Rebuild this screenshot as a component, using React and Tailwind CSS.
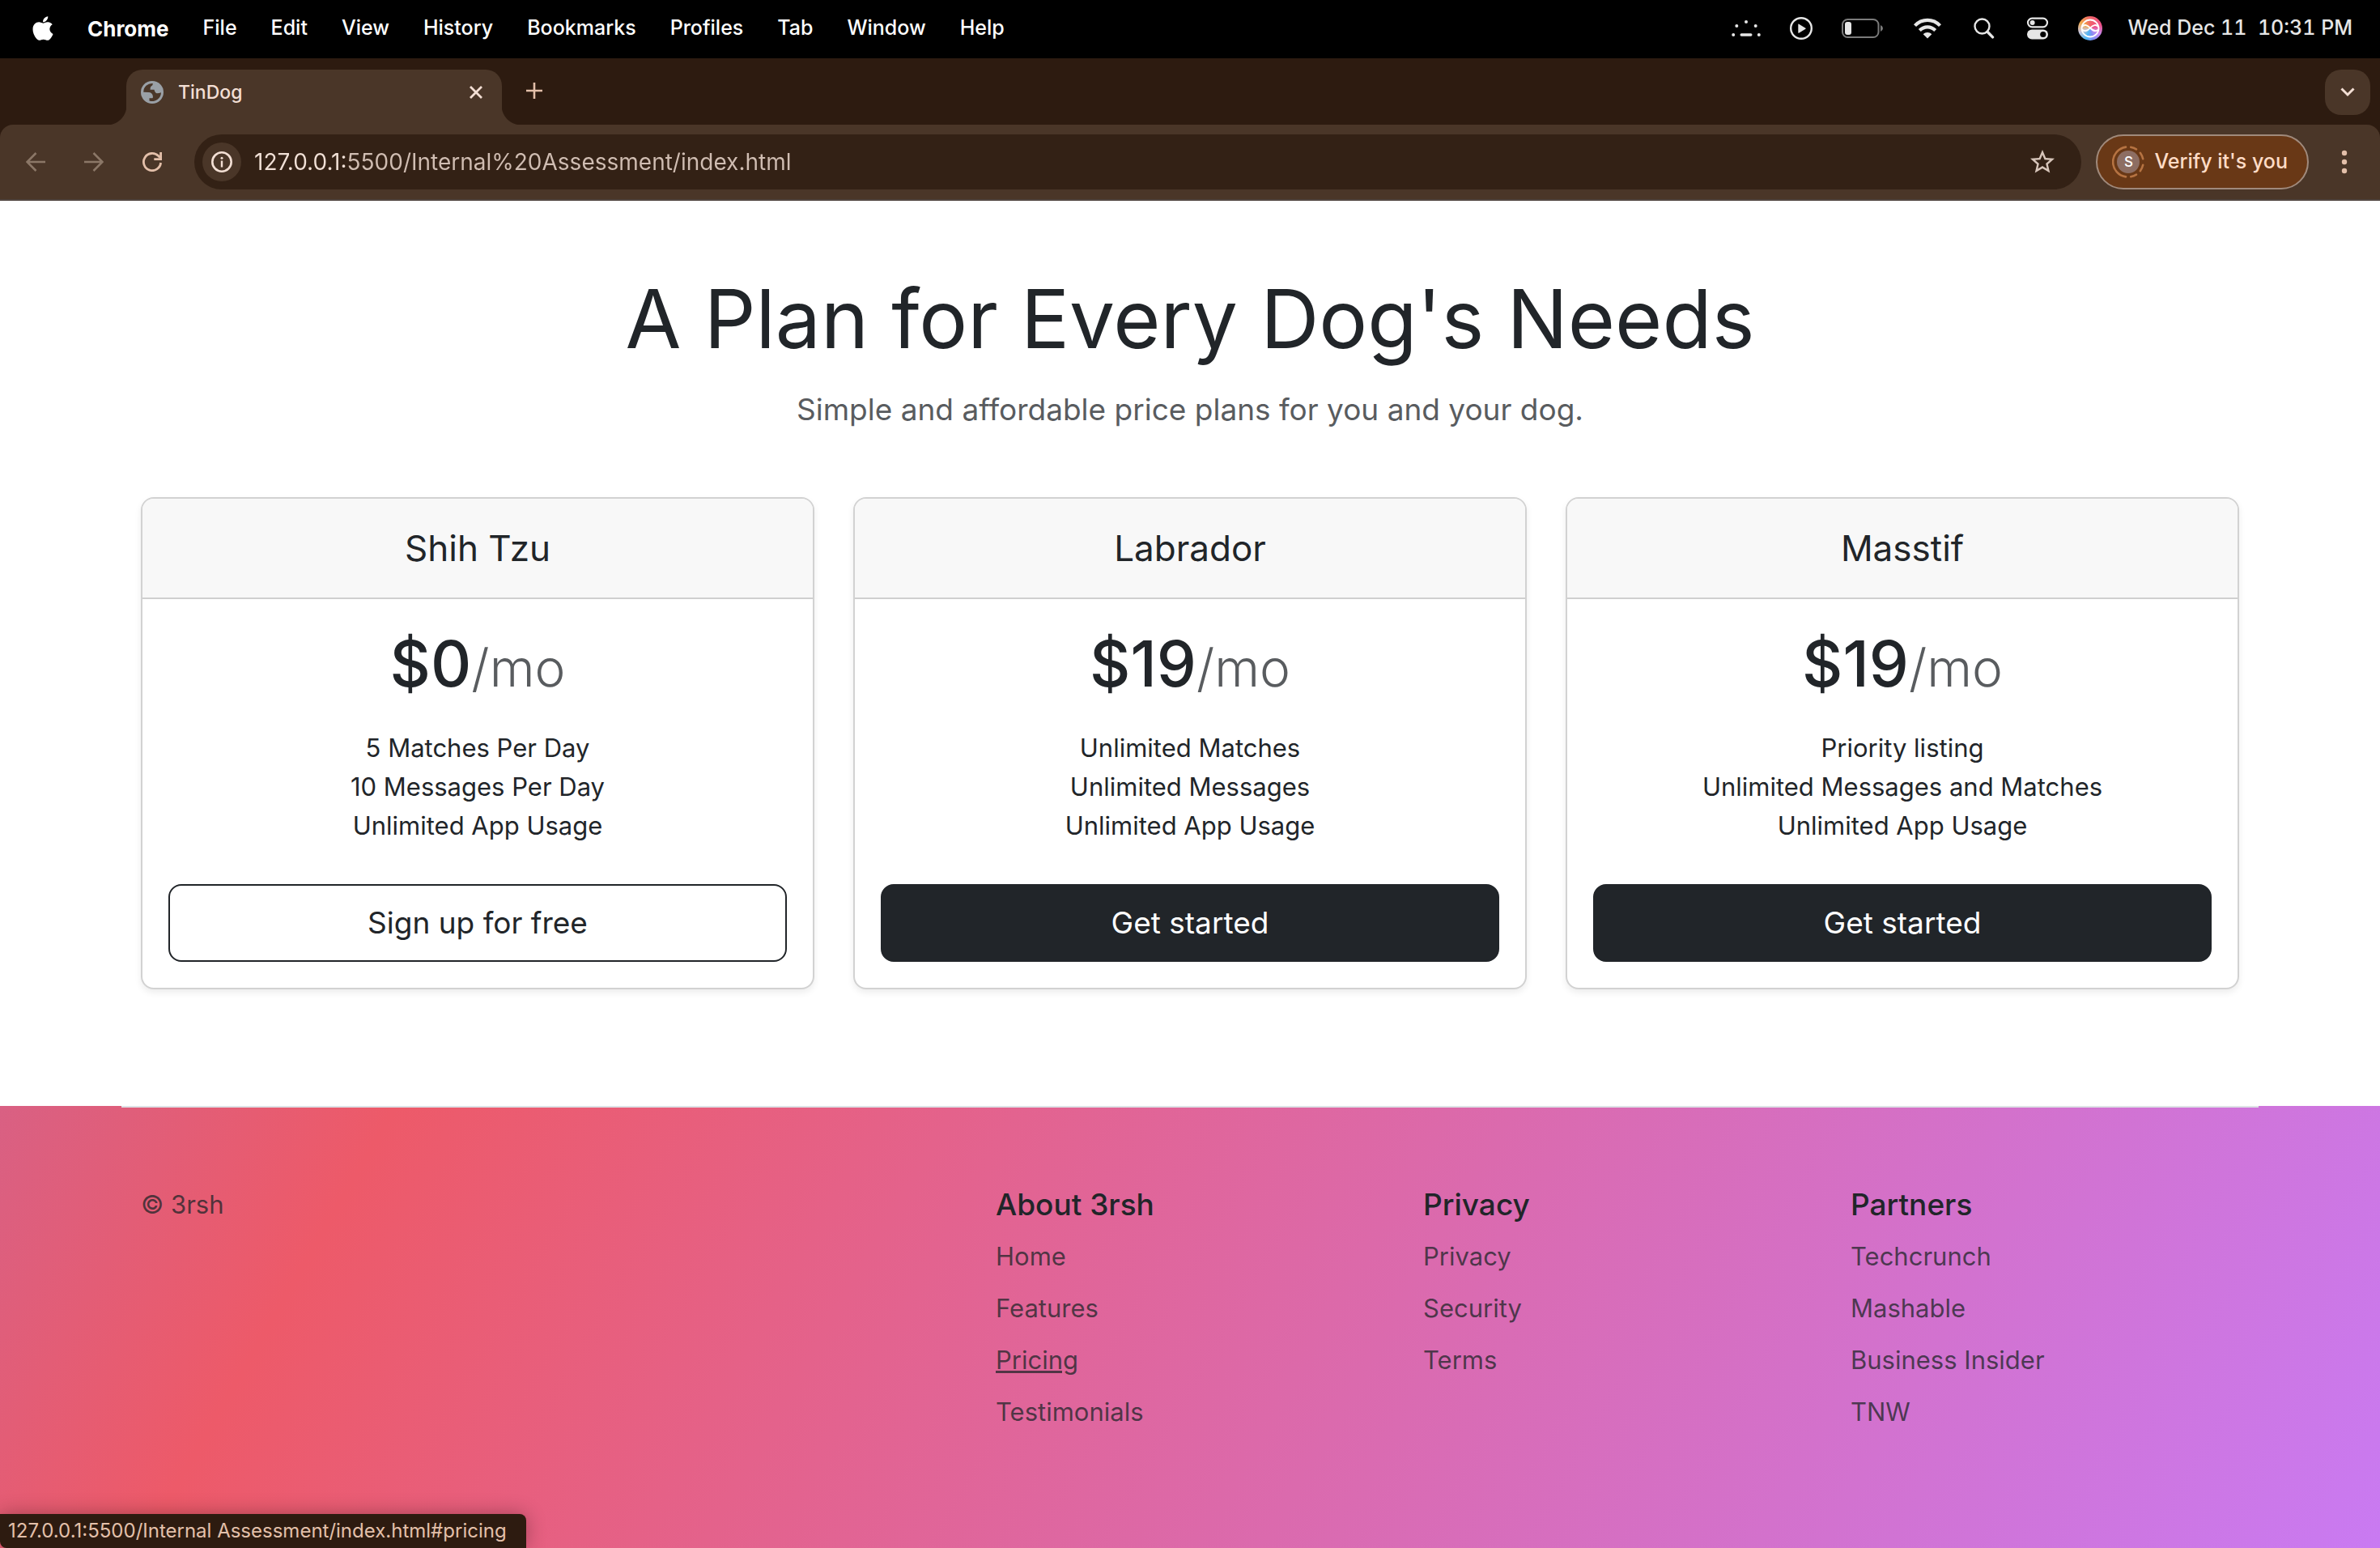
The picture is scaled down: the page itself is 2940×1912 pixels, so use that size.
import React from "react";
import { FaApple } from "react-icons/fa";
import { MdStarBorder } from "react-icons/md";

const MENUS = ["File", "Edit", "View", "History", "Bookmarks", "Profiles", "Tab", "Window", "Help"];

const PLANS = [
  {
    name: "Shih Tzu",
    price: "$0",
    lines: ["5 Matches Per Day", "10 Messages Per Day", "Unlimited App Usage"],
    cta: "Sign up for free",
    outline: true,
  },
  {
    name: "Labrador",
    price: "$19",
    lines: ["Unlimited Matches", "Unlimited Messages", "Unlimited App Usage"],
    cta: "Get started",
  },
  {
    name: "Masstif",
    price: "$19",
    lines: ["Priority listing", "Unlimited Messages and Matches", "Unlimited App Usage"],
    cta: "Get started",
  },
];

const LINKS = [
  { title: "About 3rsh", items: ["Home", "Features", "Pricing", "Testimonials"] },
  { title: "Privacy", items: ["Privacy", "Security", "Terms"] },
  { title: "Partners", items: ["Techcrunch", "Mashable", "Business Insider", "TNW"] },
];

/* ---------- menu bar icons ---------- */

function DotsIcon() {
  return (
    <svg width="36" height="20" viewBox="0 0 36 20" fill="currentColor">
      <circle cx="2.2" cy="18" r="2" />
      <circle cx="6.3" cy="7" r="2" />
      <circle cx="18" cy="2" r="2" />
      <circle cx="29.7" cy="7" r="2" />
      <circle cx="33.8" cy="18" r="2" />
      <rect x="10.5" y="16.3" width="15" height="3.4" rx="1.7" />
    </svg>
  );
}

function PlayIcon() {
  return (
    <svg width="28" height="28" viewBox="0 0 28 28" fill="none">
      <circle cx="14" cy="14" r="12.8" stroke="currentColor" strokeWidth="2.4" />
      <path d="M10.3 9v10.2q0 1 .9.5l8.2-5q.7-.5 0-1l-8.2-5q-.9-.6-.9.3z" fill="currentColor" />
    </svg>
  );
}

function BatteryIcon() {
  return (
    <svg width="52" height="24" viewBox="0 0 52 24" fill="none">
      <rect x="1" y="1" width="44.5" height="22" rx="6.5" stroke="#7b7b7b" strokeWidth="2" />
      <path d="M48 8q3 1.300 3 4t-3 4z" fill="#7b7b7b" />
      <rect x="4" y="4" width="8" height="16" rx="3" fill="currentColor" />
    </svg>
  );
}

function WifiIcon() {
  return (
    <svg width="36" height="26" viewBox="0 0 36 26" fill="none" stroke="currentColor">
      <path d="M2.500 9.600C11 .6 25 .6 33.500 9.600" strokeWidth="4.200" />
      <path d="M8.300 15.500c5.600-5.600 13.800-5.600 19.400 0" strokeWidth="4.200" />
      <path d="M18 25.500l-5.300-5.300c3-2.900 7.600-2.900 10.600 0z" fill="currentColor" stroke="none" />
    </svg>
  );
}

function SearchIcon() {
  return (
    <svg width="32" height="26" viewBox="0 0 32 26" fill="none" stroke="currentColor">
      <circle cx="13.500" cy="10.500" r="9" strokeWidth="2.400" />
      <path d="M20 17.200l6.500 6.700" strokeWidth="3.400" strokeLinecap="round" />
    </svg>
  );
}

function ControlsIcon() {
  return (
    <svg width="28" height="28" viewBox="0 0 28 28" fill="none">
      <rect x="2" y="1.700" width="24" height="10.600" rx="5.300" stroke="currentColor" strokeWidth="2.200" />
      <circle cx="7.600" cy="7" r="3" fill="currentColor" />
      <rect x="1" y="15.500" width="26" height="12" rx="6" fill="currentColor" />
      <circle cx="20.800" cy="21.500" r="3.600" fill="#000" />
    </svg>
  );
}

function AssistantIcon() {
  return (
    <span className="grid size-[30px] place-items-center rounded-full bg-[conic-gradient(from_0deg,#f0646a,#ef4f86_20%,#c58cf0_34%,#7d8ff2_46%,#4fb8f5_56%,#c9c3d6_70%,#f0a94a_84%,#f0646a)]">
      <svg width="24" height="24" viewBox="0 0 24 24" fill="none" stroke="#fff" strokeWidth="1.800">
        <circle cx="12" cy="12" r="10.500" />
        <path d="M1.800 10C5 6.500 8.500 8 12 11.500s6.500 5.200 10 2.200M1.800 13.500c3 2.700 6.500 2.200 10.200-2s7.500-4.500 10.200-1.500" />
      </svg>
    </span>
  );
}

/* ---------- browser icons ---------- */

function GlobeIcon() {
  return (
    <svg width="28" height="28" viewBox="0 0 28 28">
      <circle cx="14" cy="14" r="14" fill="#9aa0a6" />
      <path
        d="M3.200 13.800A10.900 10.900 0 0 1 14.700 2.900V4.300Q14.600 5.600 12.500 6.800 11.500 7.500 11.600 10.800H16.500Q17.600 15.200 20 15.300 22.500 15.300 25 14.300A11 11 0 0 1 10.500 24.500V21.200H14.300Q15.300 21 14.700 18 14 14.200 9.500 13.900Z"
        fill="#4a3628"
      />
    </svg>
  );
}

function ArrowIcon({ flip }) {
  return (
    <svg width="24" height="24" viewBox="0 0 24 24" fill="none" stroke="#8b7767" strokeWidth="2.600">
      {flip ? <path d="M0 12h22M11.500 1L22.500 12l-11 11" /> : <path d="M24 12H2M12.500 1L1.500 12l11 11" />}
    </svg>
  );
}

function ReloadIcon() {
  return (
    <svg width="24" height="24" viewBox="0 0 24 24" fill="none" stroke="#e3bfa9" strokeWidth="2.800">
      <path d="M22.600 13A10.600 10.600 0 1 1 19.600 4.600L21.500 6.500" />
      <path d="M22.600 0v8.600h-8.300" />
    </svg>
  );
}

function InfoIcon() {
  return (
    <svg width="26" height="26" viewBox="0 0 26 26" fill="none">
      <circle cx="13" cy="13" r="11.700" stroke="currentColor" strokeWidth="2.600" />
      <circle cx="13" cy="8.300" r="1.500" fill="currentColor" />
      <rect x="11.800" y="11.500" width="2.400" height="8" fill="currentColor" />
    </svg>
  );
}

function AvatarIcon() {
  return (
    <span className="relative grid size-10 place-items-center">
      <svg className="absolute inset-0" width="40" height="40" viewBox="0 0 40 40" fill="none">
        <g stroke="#b67342" strokeWidth="2.600" strokeLinecap="round">
          <path d="M17 1.600A18.600 18.600 0 0 0 17 38.400" />
          <path d="M23.200 1.700Q27 2.400 30 4.300" />
          <path d="M34.800 8.800Q37.300 12.300 38.200 16.200" />
          <path d="M38.200 23.800Q37.300 27.700 34.800 31.200" />
          <path d="M30 35.700Q27 37.600 23.200 38.300" />
        </g>
        <circle cx="20" cy="20" r="14" fill="#8d6e63" />
      </svg>
      <span className="relative text-[17px] leading-5 text-white">S</span>
    </span>
  );
}

/* ---------- chrome ---------- */

function MenuBar() {
  return (
    <header className="flex h-[72px] items-center justify-between bg-black pr-[34px] pb-0.5 pl-10 text-white">
      <nav className="flex items-center gap-[42px] text-[25px] font-medium">
        <button aria-label="Apple menu" className="w-[26px]">
          <FaApple size={34} className="-ml-1" />
        </button>
        <button className="text-[26px] font-bold">Chrome</button>
        {MENUS.map((m) => (
          <button key={m}>{m}</button>
        ))}
      </nav>
      <div className="flex items-center gap-8 text-[#e6e6e6]">
        <div className="flex items-center gap-9">
          <DotsIcon />
          <PlayIcon />
          <BatteryIcon />
          <WifiIcon />
          <SearchIcon />
          <ControlsIcon />
          <AssistantIcon />
        </div>
        <time className="text-[25px] font-medium whitespace-pre tabular-nums">Wed Dec 11  10:31 PM</time>
      </div>
    </header>
  );
}

function TabStrip() {
  return (
    <div className="flex h-[82px] justify-between pt-[14px] pr-3 pl-[156px]">
      <div className="flex">
        <div className="relative flex w-[464px] items-start rounded-t-[20px] bg-[#4a3628] px-[18px]">
          <span className="absolute bottom-0 -left-6 size-6 bg-[radial-gradient(circle_at_0_0,transparent_24px,#4a3628_25px)]" />
          <span className="absolute -right-6 bottom-0 size-6 bg-[radial-gradient(circle_at_100%_0,transparent_24px,#4a3628_25px)]" />
          <div className="flex h-14 grow items-center text-[#f3dfd4]">
            <GlobeIcon />
            <span className="ml-[18px] grow text-[23px] font-medium">TinDog</span>
            <button aria-label="Close tab" className="p-1.5">
              <svg width="16" height="16" viewBox="0 0 16 16" stroke="currentColor" strokeWidth="2.800">
                <path d="M1 1l14 14M15 1L1 15" />
              </svg>
            </button>
          </div>
        </div>
        <button aria-label="New tab" className="ml-[30px] flex h-[52px] items-center">
          <svg width="20" height="20" viewBox="0 0 20 20" stroke="#e3bfa9" strokeWidth="2.600">
            <path d="M10 0v20M0 10h20" />
          </svg>
        </button>
      </div>
      <button aria-label="Search tabs" className="grid size-14 place-items-center rounded-[20px] bg-[#4a3628]">
        <svg width="18" height="12" viewBox="0 0 18 12" fill="none" stroke="#f3dfd4" strokeWidth="3">
          <path d="M1.500 1.500L9 9l7.500-7.500" />
        </svg>
      </button>
    </div>
  );
}

function Toolbar() {
  return (
    <div className="flex h-[94px] items-center rounded-t-[16px] border-b-2 border-[#50443f] bg-[#4a3628] pr-[40px] pl-8">
      <div className="flex items-center gap-12">
        <button aria-label="Back"><ArrowIcon /></button>
        <button aria-label="Forward"><ArrowIcon flip /></button>
        <button aria-label="Reload"><ReloadIcon /></button>
      </div>
      <div className="ml-10 flex h-[68px] grow items-center rounded-full bg-[#332115] pr-[30px] pl-[10px]">
        <button aria-label="Site information" className="grid size-12 place-items-center rounded-full bg-[#4a3628] text-[#f3dfd4]">
          <InfoIcon />
        </button>
        <input
          aria-label="Address"
          defaultValue="127.0.0.1:5500/Internal%20Assessment/index.html"
          className="ml-4 grow bg-[linear-gradient(90deg,#f1e0d6_114px,#d0bdb2_114px)] bg-clip-text text-[28px] text-transparent outline-none"
        />
        <button aria-label="Bookmark this page" className="text-[#d8c6bb]">
          <MdStarBorder size={36} />
        </button>
      </div>
      <button className="ml-[18px] flex h-[68px] items-center gap-3 rounded-full border-2 border-[#a08a7c] bg-[#693816] pr-6 pl-[18px] text-[25px] font-medium text-[#ffdcc6]">
        <AvatarIcon />
        Verify it's you
      </button>
      <button aria-label="More" className="ml-10">
        <svg width="8" height="30" viewBox="0 0 8 30" fill="#e3bfa9">
          <circle cx="4" cy="4" r="3.200" />
          <circle cx="4" cy="15" r="3.200" />
          <circle cx="4" cy="26" r="3.200" />
        </svg>
      </button>
    </div>
  );
}

/* ---------- page ---------- */

function PlanCard({ plan }) {
  return (
    <section className="overflow-hidden rounded-[16px] border-2 border-[#d2d2d2] bg-white shadow-[0_4px_8px_rgba(0,0,0,0.075)]">
      <h2 className="border-b-2 border-[#cfcfcf] bg-[#f8f8f8] py-8 text-[44px] leading-[58px]">{plan.name}</h2>
      <div className="p-8">
        <p className="text-[78px] leading-[96px] font-medium">
          {plan.price}
          <small className="text-[64px] leading-none font-light text-[#595c5f]">/mo</small>
        </p>
        <ul className="mt-8 mb-12 text-[31px] leading-[48px]">
          {plan.lines.map((line) => (
            <li key={line}>{line}</li>
          ))}
        </ul>
        <button
          className={
            plan.outline
              ? "w-full rounded-[16px] border-2 border-[#212529] py-4 text-[37px] leading-[60px]"
              : "w-full rounded-[16px] border-2 border-[#212529] bg-[#212529] py-4 text-[37px] leading-[60px] text-white"
          }
        >
          {plan.cta}
        </button>
      </div>
    </section>
  );
}

function Footer() {
  return (
    <footer className="grow bg-[linear-gradient(120deg,#d96083_0%,#ed5a69_15%,#c97af2_100%)]">
      <div className="mx-auto grid w-full max-w-[2640px] grid-cols-5 border-t-2 border-[#dee2e6] pt-24 text-[31px] leading-[48px]">
        <p className="col-span-2 px-6 text-[#212529]/75">© 3rsh</p>
        {LINKS.map((col) => (
          <div key={col.title} className="px-6">
            <h3 className="text-[37px] leading-[48px] font-medium">{col.title}</h3>
            <ul>
              {col.items.map((item) => (
                <li key={item} className="mt-4">
                  <a
                    href={"#" + item.toLowerCase()}
                    className={item === "Pricing" ? "text-[#212529]/75 underline" : "text-[#212529]/75"}
                  >
                    {item}
                  </a>
                </li>
              ))}
            </ul>
          </div>
        ))}
      </div>
    </footer>
  );
}

export default function App() {
  return (
    <div className="relative flex min-h-screen flex-col bg-white font-['Inter',sans-serif] text-[#212529]">
      <MenuBar />
      <div className="bg-[#2d1b10]">
        <TabStrip />
        <Toolbar />
      </div>
      <main className="mx-auto w-full max-w-[2640px] px-6 pt-[92px] pb-36">
        <h1 className="text-center text-[100px] leading-[108px]">A Plan for Every Dog's Needs</h1>
        <p className="mt-7 text-center text-[37px] leading-[60px] text-[#595c5f]">
          Simple and affordable price plans for you and your dog.
        </p>
        <div className="mt-[78px] grid grid-cols-3 gap-12 text-center">
          {PLANS.map((plan) => (
            <PlanCard key={plan.name} plan={plan} />
          ))}
        </div>
      </main>
      <Footer />
      <div className="absolute bottom-0 left-0 flex h-[42px] items-center rounded-tr-[8px] rounded-bl-[8px] bg-[#2d1b10] pr-6 pl-[10px] text-[24px] text-[#e3c0aa] shadow-[0_0_24px_rgba(0,0,0,0.3)]">
        127.0.0.1:5500/Internal Assessment/index.html#pricing
      </div>
    </div>
  );
}
